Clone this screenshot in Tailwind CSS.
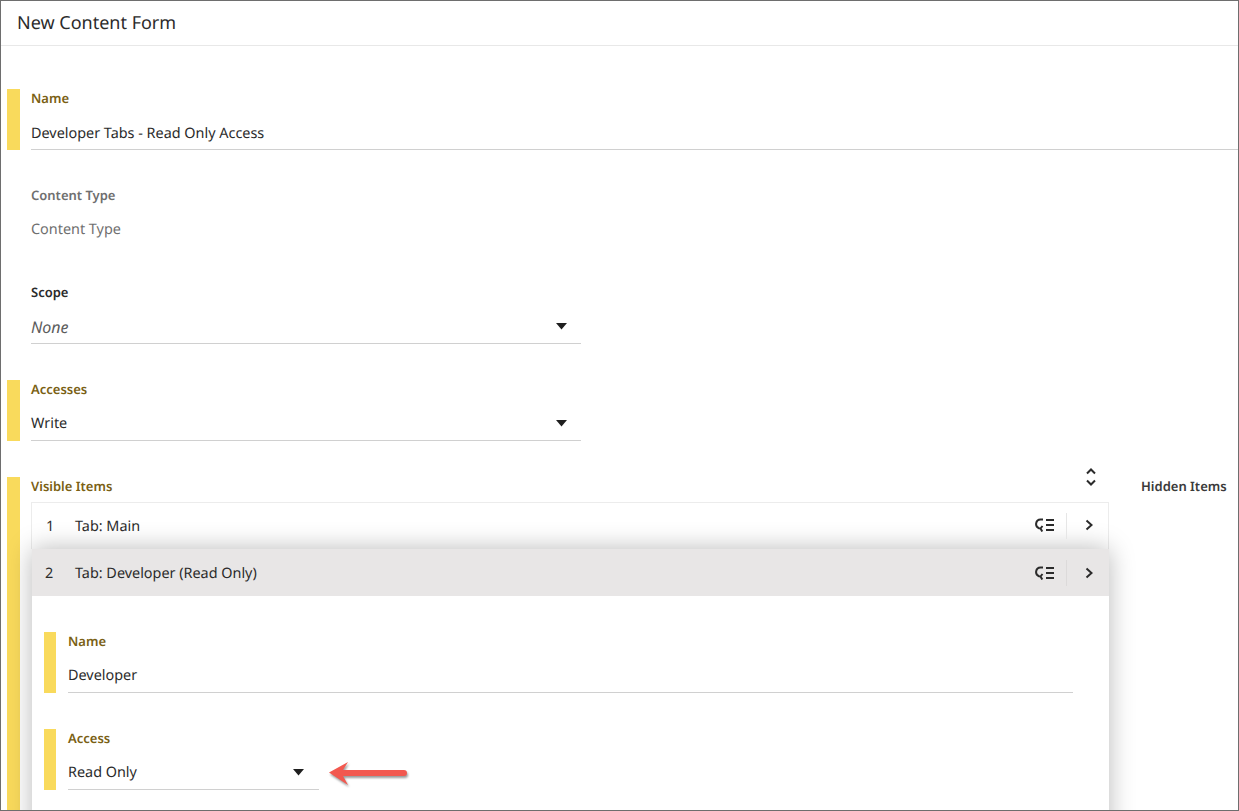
<!DOCTYPE html>
<html lang="en">
<head>
    <meta charset="UTF-8">
    <title>New Content Form</title>
    <script src="https://cdn.jsdelivr.net/npm/@tailwindcss/browser@4"></script>
</head>
<body class="bg-white">
    <div class="relative h-[811px] w-[1239px] overflow-hidden border border-[#6e6e6e] font-['Noto_Sans',sans-serif] text-[#2b2b2b] [text-rendering:geometricPrecision]">
        <header class="h-[45px] border-b border-[#e8e8e8] pl-4 pt-[9px] text-[18px] leading-[27px]">New Content Form</header>

        <div class="pl-[6px] pt-[43px]">
            <!-- name -->
            <div class="flex h-[61px] gap-[11px]">
                <div class="w-[13px] bg-[#f9da5c]"></div>
                <div class="flex-1">
                    <div class="h-[33px] text-[13px] leading-[18px] font-semibold text-[#7a5f14]">Name</div>
                    <div class="h-[28px] border-b border-[#d0d0d0] pt-[2px] text-[14.4px] leading-[20px]">Developer Tabs - Read Only Access</div>
                </div>
            </div>

            <!-- content type -->
            <div class="mt-[36px] flex h-[61px] gap-[11px]">
                <div class="w-[13px]"></div>
                <div class="flex-1">
                    <div class="h-[33px] text-[13px] leading-[18px] font-semibold text-[#6f6f6f]">Content Type</div>
                    <div class="pt-px text-[14.4px] leading-[20px] text-[#6f6f6f]">Content Type</div>
                </div>
            </div>

            <!-- scope -->
            <div class="mt-[36px] flex h-[61px] gap-[11px]">
                <div class="w-[13px]"></div>
                <div class="w-[550px]">
                    <div class="h-[33px] text-[13px] leading-[18px] font-semibold">Scope</div>
                    <div class="flex h-[28px] items-start justify-between border-b border-[#d0d0d0] pt-px pr-[14px] text-[16px] leading-[20px] italic text-[#5c5c5c]">
                        None
                        <svg class="mt-[6px]" width="11" height="7" viewBox="0 0 11 7"><path d="M0 0h11L5.500 6.500z" fill="#1f1f1f"/></svg>
                    </div>
                </div>
            </div>

            <!-- accesses -->
            <div class="mt-[36px] flex h-[61px] gap-[11px]">
                <div class="w-[13px] bg-[#f9da5c]"></div>
                <div class="w-[550px]">
                    <div class="h-[33px] text-[13px] leading-[18px] font-semibold text-[#7a5f14]">Accesses</div>
                    <div class="flex h-[28px] items-start justify-between border-b border-[#d0d0d0] pt-px pr-[14px] text-[14.4px] leading-[20px]">
                        Write
                        <svg class="mt-[6px]" width="11" height="7" viewBox="0 0 11 7"><path d="M0 0h11L5.500 6.500z" fill="#1f1f1f"/></svg>
                    </div>
                </div>
            </div>

            <!-- visible items -->
            <div class="mt-[36px] flex gap-[11px]">
                <div class="h-[340px] w-[13px] bg-[#f9da5c]"></div>
                <div class="w-[1078px]">
                    <div class="flex h-[25px] items-start justify-between">
                        <div class="text-[13px] leading-[18px] font-semibold text-[#7a5f14]">Visible Items</div>
                        <svg class="mr-[12px] -mt-[10px]" width="12" height="20" viewBox="0 0 12 20" fill="none" stroke="#2b2b2b" stroke-width="2"><path d="M2 6.500l4-4 4 4M2 13.500l4 4 4-4"/></svg>
                    </div>
                    <div class="border border-[#ececec] border-b-0">
                        <div class="flex h-[46px] items-center text-[14.4px]">
                            <span class="w-[43px] pt-[2px] pl-[14px]">1</span>
                            <span class="flex-1 pt-[2px]">Tab: Main</span>
                            <svg class="-translate-y-px" width="19" height="14" viewBox="0 0 19 14" fill="none" stroke="#2b2b2b" stroke-width="2"><path d="M8 1.500H5.500A4.500 4.500 0 0 0 4 10.200L6 10.500M7.500 8L5.500 10.500l1.800 3M11 2h8M11 7h8M11 12h8"/></svg>
                            <span class="ml-[12px] mr-[13px] h-[26px] w-px bg-[#e6e6e6]"></span>
                            <svg class="mr-[15px] ml-[5px] -translate-y-px" width="8" height="12" viewBox="0 0 8 12" fill="none" stroke="#2b2b2b" stroke-width="2"><path d="M1.500 1.500l5 4.500-5 4.500"/></svg>
                        </div>
                    </div>
                    <div class="ml-px h-[300px] bg-white shadow-[0_0_24px_rgba(0,0,0,0.28)]">
                        <div class="flex h-[47px] items-center bg-[#e8e6e6] text-[14.4px]">
                            <span class="w-[43px] pt-[2px] pl-[13px]">2</span>
                            <span class="flex-1 pt-[2px]">Tab: Developer (Read Only)</span>
                            <svg width="19" height="14" viewBox="0 0 19 14" fill="none" stroke="#2b2b2b" stroke-width="2"><path d="M8 1.500H5.500A4.500 4.500 0 0 0 4 10.200L6 10.500M7.500 8L5.500 10.500l1.800 3M11 2h8M11 7h8M11 12h8"/></svg>
                            <span class="ml-[12px] mr-[13px] h-[26px] w-px bg-[#dcdada]"></span>
                            <svg class="mr-[16px] ml-[5px]" width="8" height="12" viewBox="0 0 8 12" fill="none" stroke="#2b2b2b" stroke-width="2"><path d="M1.500 1.500l5 4.500-5 4.500"/></svg>
                        </div>

                        <div class="pl-[12px] pt-[36px]">
                            <div class="flex h-[61px] gap-[12px]">
                                <div class="w-[12px] bg-[#f9da5c]"></div>
                                <div class="w-[1005px]">
                                    <div class="h-[33px] text-[13px] leading-[18px] font-semibold text-[#7a5f14]">Name</div>
                                    <div class="h-[28px] border-b border-[#d0d0d0] pt-px text-[14.4px] leading-[20px]">Developer</div>
                                </div>
                            </div>
                            <div class="mt-[36px] flex h-[61px] gap-[12px]">
                                <div class="w-[12px] bg-[#f9da5c]"></div>
                                <div class="w-[251px]">
                                    <div class="h-[33px] text-[13px] leading-[18px] font-semibold text-[#7a5f14]">Access</div>
                                    <div class="flex h-[28px] items-start justify-between border-b border-[#d0d0d0] pt-px pr-[15px] text-[14.4px] leading-[20px]">
                                        Read Only
                                        <svg class="mt-[6px]" width="11" height="7" viewBox="0 0 11 7"><path d="M0 0h11L5.500 6.500z" fill="#1f1f1f"/></svg>
                                    </div>
                                </div>
                            </div>
                        </div>
                    </div>
                </div>
                <div class="pl-[21px] text-[13px] leading-[18px] font-semibold whitespace-nowrap text-[#3a3a3a]">Hidden Items</div>
            </div>
        </div>

        <!-- callout arrow -->
        <svg class="absolute left-[327px] top-[758px] drop-shadow-[1px_2px_1px_rgba(0,0,0,0.4)]" width="82" height="30" viewBox="0 0 82 30">
            <path d="M1 13.500L20 3l-5 8h61a3 3 0 0 1 0 6H15l5 9z" fill="#f2584f"/>
        </svg>
    </div>
</body>
</html>
